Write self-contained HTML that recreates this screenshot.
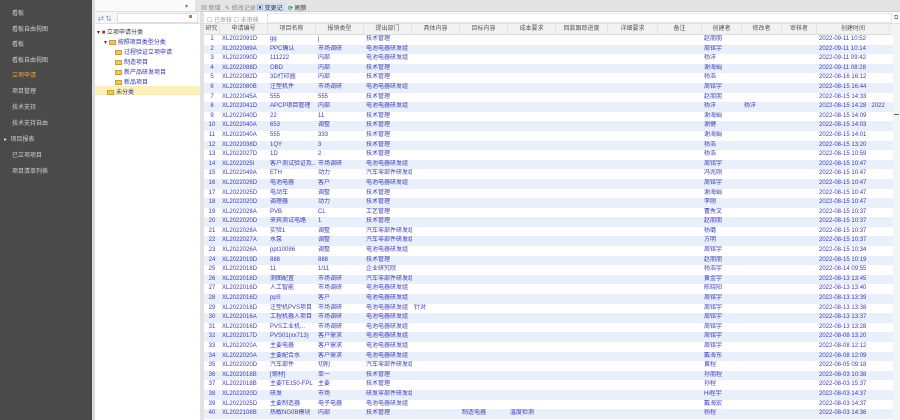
<!DOCTYPE html>
<html><head><meta charset="utf-8">
<style>
*{margin:0;padding:0;box-sizing:border-box}
body{width:900px;height:420px;overflow:hidden;background:#fff;font-family:"Liberation Sans","Noto Sans CJK SC",sans-serif;font-size:6px;position:relative}
.side{position:absolute;left:0;top:0;width:92px;height:420px;background:#4a4a4a}
.side div{position:absolute;left:12px;color:#d0d0d0;font-size:6px;white-space:nowrap}
.side .on{color:#f0a830}
.div1{position:absolute;left:92px;top:0;width:3px;height:420px;background:#dcdcdc}
.tree{position:absolute;left:95px;top:0;width:105px;height:420px;background:#fff}
.div2{position:absolute;left:200px;top:0;width:4px;height:420px;background:#e2e2e2}
.top{position:absolute;left:195px;top:0;width:705px;height:12px;background:#e4e4e4;border-bottom:1px solid #d0d0d0}
.top span{position:absolute;top:3px;color:#888}
.tb2{position:absolute;left:204px;top:12px;width:696px;height:12px;background:#fff;border-bottom:1px solid #e0e0e0}
.grid{position:absolute;left:204px;top:24px;width:689px}
.hd{height:11px;background:#f2f2f2;border-bottom:1px solid #ddd;display:flex;color:#555}
.r{height:9.6px;display:flex;color:#3a3ac0;line-height:9.6px}
.r:nth-child(even){background:#e9f0fb}
.c{overflow:hidden;white-space:nowrap;flex:none;padding-left:2px}
.hd .c{text-align:center;line-height:11px;padding:0;border-right:1px solid #e4e4e4}
.n{width:16px;text-align:center;padding:0;color:#3a3ac0}
.sb{position:absolute;left:893px;top:24px;width:7px;height:396px;background:#f4f4f4}
.ti{position:absolute;white-space:nowrap;color:#3333aa}
.fold{display:inline-block;width:7px;height:5px;background:#f0c860;border:1px solid #c9a030;vertical-align:middle;margin-right:2px}
</style></head><body>
<div class="side">
<div style="top:8px">看板</div>
<div style="top:24px">看板自由视图</div>
<div style="top:39px">看板</div>
<div style="top:55px">看板自由视图</div>
<div class="on" style="top:70px">立项申请</div>
<div style="top:86px">项目管理</div>
<div style="top:102px">技术支持</div>
<div style="top:118px">技术支持自由</div>
<div style="top:134px;left:4px">▸ &nbsp;项目报表</div>
<div style="top:150px">已立项项目</div>
<div style="top:166px">项目清单列表</div>
</div>
<div class="div1"></div>
<div class="tree">
<div style="position:absolute;left:0;top:0;width:105px;height:12px;background:#fafafa;border-bottom:1px solid #ddd"><span style="position:absolute;left:90px;top:3px;color:#777">▾</span></div>
<div style="position:absolute;left:0;top:12px;width:105px;height:12px;background:#f6f6f6;border-bottom:1px solid #e0e0e0">
<span style="position:absolute;left:3px;top:2px;color:#3a7ad0">⇄ ⇅</span>
<div style="position:absolute;left:22px;top:1px;width:81px;height:10px;background:#fff;border:1px solid #ddd"></div>
<span style="position:absolute;left:94px;top:3px;width:3px;height:3px;background:#e07020"></span></div>
<div class="ti" style="left:2px;top:27px;color:#333">▾ <span style="color:#c03030">■</span> 立项申请分类</div>
<div class="ti" style="left:9px;top:37px">▾ <span class="fold"></span>按照项目类型分类</div>
<div class="ti" style="left:20px;top:47px"><span class="fold"></span>过程验证立项申请</div>
<div class="ti" style="left:20px;top:57px"><span class="fold"></span>制造项目</div>
<div class="ti" style="left:20px;top:67px"><span class="fold"></span>新产品研发项目</div>
<div class="ti" style="left:20px;top:77px"><span class="fold"></span>新品项目</div>
<div style="position:absolute;left:0;top:86px;width:105px;height:9px;background:#fbf1b8"></div>
<div class="ti" style="left:12px;top:87px"><span class="fold"></span>未分类</div>
</div>
<div class="div2"></div>
<div class="top">
<span style="left:6px">▦ 新增</span><span style="left:30px">✎ 修改记录</span>
<span style="left:60px;color:#333;background:#cfe0f5;padding:0 2px">▣ 变更记</span>
<span style="left:93px;color:#333"><b style="color:#2a9a3a">⟳</b> 刷新</span>
</div>
<div class="tb2"><span style="position:absolute;left:3px;top:3px;color:#999">☐ 已审核 ☐ 未审核</span>
<div style="position:absolute;left:63px;top:1px;width:625px;height:10px;border:1px solid #e4e4e4"></div>
<span style="position:absolute;left:690px;top:3px;color:#777">⧉</span></div>
<div class="grid">
<div class="hd"><div class="c n" style="color:#555">研究</div><div class="c" style="width:48px">申请编号</div><div class="c" style="width:48px">项目名称</div><div class="c" style="width:48px">报销类型</div><div class="c" style="width:48px">提出部门</div><div class="c" style="width:48px">具体内容</div><div class="c" style="width:48px">目标内容</div><div class="c" style="width:48px">成本要求</div><div class="c" style="width:52px">回款跟踪进度</div><div class="c" style="width:50px">详细要求</div><div class="c" style="width:44px">备注</div><div class="c" style="width:40px">创建者</div><div class="c" style="width:40px">修改者</div><div class="c" style="width:35px">审核者</div><div class="c" style="width:73px">创建时间</div><div class="c" style="width:10px">(</div></div>
<div id="rows">
<div class="r"><div class="c n">1</div><div class="c" style="width:48px">XL2022091D</div><div class="c" style="width:48px">gg</div><div class="c" style="width:48px">j</div><div class="c" style="width:48px">技术管理</div><div class="c" style="width:290px"></div><div class="c" style="width:40px">赵朋朋</div><div class="c" style="width:75px"></div><div class="c" style="width:83px">2022-09-11 10:52</div></div>
<div class="r"><div class="c n">2</div><div class="c" style="width:48px">XL2022089A</div><div class="c" style="width:48px">PPC确认</div><div class="c" style="width:48px">市场调研</div><div class="c" style="width:48px">电池电器研发组</div><div class="c" style="width:290px"></div><div class="c" style="width:40px">周铭宇</div><div class="c" style="width:75px"></div><div class="c" style="width:83px">2022-09-11 10:14</div></div>
<div class="r"><div class="c n">3</div><div class="c" style="width:48px">XL2022090D</div><div class="c" style="width:48px">111222</div><div class="c" style="width:48px">内部</div><div class="c" style="width:48px">电池电器研发组</div><div class="c" style="width:290px"></div><div class="c" style="width:40px">杨洋</div><div class="c" style="width:75px"></div><div class="c" style="width:83px">2022-09-11 09:42</div></div>
<div class="r"><div class="c n">4</div><div class="c" style="width:48px">XL2022088D</div><div class="c" style="width:48px">OBD</div><div class="c" style="width:48px">内部</div><div class="c" style="width:48px">技术管理</div><div class="c" style="width:290px"></div><div class="c" style="width:40px">谢海娟</div><div class="c" style="width:75px"></div><div class="c" style="width:83px">2022-09-11 08:28</div></div>
<div class="r"><div class="c n">5</div><div class="c" style="width:48px">XL2022082D</div><div class="c" style="width:48px">3D打印圆</div><div class="c" style="width:48px">内部</div><div class="c" style="width:48px">技术管理</div><div class="c" style="width:290px"></div><div class="c" style="width:40px">杨浩</div><div class="c" style="width:75px"></div><div class="c" style="width:83px">2022-08-16 16:12</div></div>
<div class="r"><div class="c n">6</div><div class="c" style="width:48px">XL2022080B</div><div class="c" style="width:48px">注塑机件</div><div class="c" style="width:48px">市场调研</div><div class="c" style="width:48px">电池电器研发组</div><div class="c" style="width:290px"></div><div class="c" style="width:40px">周铭宇</div><div class="c" style="width:75px"></div><div class="c" style="width:83px">2022-08-15 16:44</div></div>
<div class="r"><div class="c n">7</div><div class="c" style="width:48px">XL2022045A</div><div class="c" style="width:48px">555</div><div class="c" style="width:48px">555</div><div class="c" style="width:48px">技术管理</div><div class="c" style="width:290px"></div><div class="c" style="width:40px">赵朋朋</div><div class="c" style="width:75px"></div><div class="c" style="width:83px">2022-08-15 14:33</div></div>
<div class="r"><div class="c n">8</div><div class="c" style="width:48px">XL2022041D</div><div class="c" style="width:48px">APCP项目管理</div><div class="c" style="width:48px">内部</div><div class="c" style="width:48px">电池电器研发组</div><div class="c" style="width:290px"></div><div class="c" style="width:40px">杨洋</div><div class="c" style="width:40px">杨洋</div><div class="c" style="width:35px"></div><div class="c" style="width:83px">2022-08-15 14:28 &nbsp; 2022</div></div>
<div class="r"><div class="c n">9</div><div class="c" style="width:48px">XL2022040D</div><div class="c" style="width:48px">22</div><div class="c" style="width:48px">11</div><div class="c" style="width:48px">技术管理</div><div class="c" style="width:290px"></div><div class="c" style="width:40px">谢海娟</div><div class="c" style="width:75px"></div><div class="c" style="width:83px">2022-08-15 14:09</div></div>
<div class="r"><div class="c n">10</div><div class="c" style="width:48px">XL2022040A</div><div class="c" style="width:48px">653</div><div class="c" style="width:48px">调整</div><div class="c" style="width:48px">技术管理</div><div class="c" style="width:290px"></div><div class="c" style="width:40px">谢健</div><div class="c" style="width:75px"></div><div class="c" style="width:83px">2022-08-15 14:03</div></div>
<div class="r"><div class="c n">11</div><div class="c" style="width:48px">XL2022040A</div><div class="c" style="width:48px">555</div><div class="c" style="width:48px">333</div><div class="c" style="width:48px">技术管理</div><div class="c" style="width:290px"></div><div class="c" style="width:40px">谢海娟</div><div class="c" style="width:75px"></div><div class="c" style="width:83px">2022-08-15 14:01</div></div>
<div class="r"><div class="c n">12</div><div class="c" style="width:48px">XL2022038D</div><div class="c" style="width:48px">1QY</div><div class="c" style="width:48px">3</div><div class="c" style="width:48px">技术管理</div><div class="c" style="width:290px"></div><div class="c" style="width:40px">杨浩</div><div class="c" style="width:75px"></div><div class="c" style="width:83px">2022-08-15 13:20</div></div>
<div class="r"><div class="c n">13</div><div class="c" style="width:48px">XL2022027D</div><div class="c" style="width:48px">1D</div><div class="c" style="width:48px">2</div><div class="c" style="width:48px">技术管理</div><div class="c" style="width:290px"></div><div class="c" style="width:40px">杨浩</div><div class="c" style="width:75px"></div><div class="c" style="width:83px">2022-08-15 10:59</div></div>
<div class="r"><div class="c n">14</div><div class="c" style="width:48px">XL2022025I</div><div class="c" style="width:48px">客户测试验证及...</div><div class="c" style="width:48px">市场调研</div><div class="c" style="width:48px">电池电器研发组</div><div class="c" style="width:290px"></div><div class="c" style="width:40px">周铭宇</div><div class="c" style="width:75px"></div><div class="c" style="width:83px">2022-08-15 10:47</div></div>
<div class="r"><div class="c n">15</div><div class="c" style="width:48px">XL2022049A</div><div class="c" style="width:48px">ETH</div><div class="c" style="width:48px">动力</div><div class="c" style="width:48px">汽车零部件研发组</div><div class="c" style="width:290px"></div><div class="c" style="width:40px">冯兆刚</div><div class="c" style="width:75px"></div><div class="c" style="width:83px">2022-08-15 10:47</div></div>
<div class="r"><div class="c n">16</div><div class="c" style="width:48px">XL2022026D</div><div class="c" style="width:48px">电池电器</div><div class="c" style="width:48px">客户</div><div class="c" style="width:48px">电池电器研发组</div><div class="c" style="width:290px"></div><div class="c" style="width:40px">周铭宇</div><div class="c" style="width:75px"></div><div class="c" style="width:83px">2022-08-15 10:47</div></div>
<div class="r"><div class="c n">17</div><div class="c" style="width:48px">XL2022025D</div><div class="c" style="width:48px">电动车</div><div class="c" style="width:48px">调整</div><div class="c" style="width:48px">技术管理</div><div class="c" style="width:290px"></div><div class="c" style="width:40px">谢海娟</div><div class="c" style="width:75px"></div><div class="c" style="width:83px">2022-08-15 10:47</div></div>
<div class="r"><div class="c n">18</div><div class="c" style="width:48px">XL2022020D</div><div class="c" style="width:48px">调理器</div><div class="c" style="width:48px">动力</div><div class="c" style="width:48px">技术管理</div><div class="c" style="width:290px"></div><div class="c" style="width:40px">李刚</div><div class="c" style="width:75px"></div><div class="c" style="width:83px">2022-08-15 10:47</div></div>
<div class="r"><div class="c n">19</div><div class="c" style="width:48px">XL2022028A</div><div class="c" style="width:48px">PVB</div><div class="c" style="width:48px">CL</div><div class="c" style="width:48px">工艺管理</div><div class="c" style="width:290px"></div><div class="c" style="width:40px">曹秀文</div><div class="c" style="width:75px"></div><div class="c" style="width:83px">2022-08-15 10:37</div></div>
<div class="r"><div class="c n">20</div><div class="c" style="width:48px">XL2022020D</div><div class="c" style="width:48px">来宾测试电路</div><div class="c" style="width:48px">1</div><div class="c" style="width:48px">技术管理</div><div class="c" style="width:290px"></div><div class="c" style="width:40px">赵朋朋</div><div class="c" style="width:75px"></div><div class="c" style="width:83px">2022-08-15 10:37</div></div>
<div class="r"><div class="c n">21</div><div class="c" style="width:48px">XL2022028A</div><div class="c" style="width:48px">实验1</div><div class="c" style="width:48px">调整</div><div class="c" style="width:48px">汽车零部件研发组</div><div class="c" style="width:290px"></div><div class="c" style="width:40px">杨璐</div><div class="c" style="width:75px"></div><div class="c" style="width:83px">2022-08-15 10:37</div></div>
<div class="r"><div class="c n">22</div><div class="c" style="width:48px">XL2022027A</div><div class="c" style="width:48px">水泵</div><div class="c" style="width:48px">调整</div><div class="c" style="width:48px">汽车零部件研发组</div><div class="c" style="width:290px"></div><div class="c" style="width:40px">方明</div><div class="c" style="width:75px"></div><div class="c" style="width:83px">2022-08-15 10:37</div></div>
<div class="r"><div class="c n">23</div><div class="c" style="width:48px">XL2022026A</div><div class="c" style="width:48px">ppt10086</div><div class="c" style="width:48px">调整</div><div class="c" style="width:48px">电池电器研发组</div><div class="c" style="width:290px"></div><div class="c" style="width:40px">周铭宇</div><div class="c" style="width:75px"></div><div class="c" style="width:83px">2022-08-15 10:34</div></div>
<div class="r"><div class="c n">24</div><div class="c" style="width:48px">XL2022019D</div><div class="c" style="width:48px">888</div><div class="c" style="width:48px">888</div><div class="c" style="width:48px">技术管理</div><div class="c" style="width:290px"></div><div class="c" style="width:40px">赵朋朋</div><div class="c" style="width:75px"></div><div class="c" style="width:83px">2022-08-15 10:19</div></div>
<div class="r"><div class="c n">25</div><div class="c" style="width:48px">XL2022018D</div><div class="c" style="width:48px">11</div><div class="c" style="width:48px">1/11</div><div class="c" style="width:48px">企业研究院</div><div class="c" style="width:290px"></div><div class="c" style="width:40px">杨浩宇</div><div class="c" style="width:75px"></div><div class="c" style="width:83px">2022-08-14 09:55</div></div>
<div class="r"><div class="c n">26</div><div class="c" style="width:48px">XL2022018D</div><div class="c" style="width:48px">测图配置</div><div class="c" style="width:48px">市场调研</div><div class="c" style="width:48px">汽车零部件研发组</div><div class="c" style="width:290px"></div><div class="c" style="width:40px">黄金宇</div><div class="c" style="width:75px"></div><div class="c" style="width:83px">2022-08-13 13:45</div></div>
<div class="r"><div class="c n">27</div><div class="c" style="width:48px">XL2022016D</div><div class="c" style="width:48px">人工智能</div><div class="c" style="width:48px">市场调研</div><div class="c" style="width:48px">电池电器研发组</div><div class="c" style="width:290px"></div><div class="c" style="width:40px">陈晓阳</div><div class="c" style="width:75px"></div><div class="c" style="width:83px">2022-08-13 13:40</div></div>
<div class="r"><div class="c n">28</div><div class="c" style="width:48px">XL2022016D</div><div class="c" style="width:48px">ppS</div><div class="c" style="width:48px">客户</div><div class="c" style="width:48px">电池电器研发组</div><div class="c" style="width:290px"></div><div class="c" style="width:40px">周铭宇</div><div class="c" style="width:75px"></div><div class="c" style="width:83px">2022-08-13 13:39</div></div>
<div class="r"><div class="c n">29</div><div class="c" style="width:48px">XL2022016D</div><div class="c" style="width:48px">注塑机PVS项目</div><div class="c" style="width:48px">市场调研</div><div class="c" style="width:48px">电池电器研发组</div><div class="c" style="width:48px">针对</div><div class="c" style="width:242px"></div><div class="c" style="width:40px">周铭宇</div><div class="c" style="width:75px"></div><div class="c" style="width:83px">2022-08-13 13:38</div></div>
<div class="r"><div class="c n">30</div><div class="c" style="width:48px">XL2022016A</div><div class="c" style="width:48px">工程机器人项目</div><div class="c" style="width:48px">市场调研</div><div class="c" style="width:48px">电池电器研发组</div><div class="c" style="width:290px"></div><div class="c" style="width:40px">周铭宇</div><div class="c" style="width:75px"></div><div class="c" style="width:83px">2022-08-13 13:37</div></div>
<div class="r"><div class="c n">31</div><div class="c" style="width:48px">XL2022016D</div><div class="c" style="width:48px">PVS工业机...</div><div class="c" style="width:48px">市场调研</div><div class="c" style="width:48px">电池电器研发组</div><div class="c" style="width:290px"></div><div class="c" style="width:40px">周铭宇</div><div class="c" style="width:75px"></div><div class="c" style="width:83px">2022-08-13 13:28</div></div>
<div class="r"><div class="c n">32</div><div class="c" style="width:48px">XL2022017D</div><div class="c" style="width:48px">PVS01(xx713)</div><div class="c" style="width:48px">客户需求</div><div class="c" style="width:48px">电池电器研发组</div><div class="c" style="width:290px"></div><div class="c" style="width:40px">周铭宇</div><div class="c" style="width:75px"></div><div class="c" style="width:83px">2022-08-08 13:20</div></div>
<div class="r"><div class="c n">33</div><div class="c" style="width:48px">XL2022020A</div><div class="c" style="width:48px">主要电器</div><div class="c" style="width:48px">客户需求</div><div class="c" style="width:48px">电池电器研发组</div><div class="c" style="width:290px"></div><div class="c" style="width:40px">周铭宇</div><div class="c" style="width:75px"></div><div class="c" style="width:83px">2022-08-08 12:12</div></div>
<div class="r"><div class="c n">34</div><div class="c" style="width:48px">XL2022020A</div><div class="c" style="width:48px">主要配合水</div><div class="c" style="width:48px">客户需求</div><div class="c" style="width:48px">电池电器研发组</div><div class="c" style="width:290px"></div><div class="c" style="width:40px">戴海东</div><div class="c" style="width:75px"></div><div class="c" style="width:83px">2022-08-08 12:09</div></div>
<div class="r"><div class="c n">35</div><div class="c" style="width:48px">XL2022020D</div><div class="c" style="width:48px">汽车部件</div><div class="c" style="width:48px">切削</div><div class="c" style="width:48px">汽车零部件研发组</div><div class="c" style="width:290px"></div><div class="c" style="width:40px">黄程</div><div class="c" style="width:75px"></div><div class="c" style="width:83px">2022-08-05 09:18</div></div>
<div class="r"><div class="c n">36</div><div class="c" style="width:48px">XL2022018B</div><div class="c" style="width:48px">[钢材]</div><div class="c" style="width:48px">单一</div><div class="c" style="width:48px">技术管理</div><div class="c" style="width:290px"></div><div class="c" style="width:40px">孙朋程</div><div class="c" style="width:75px"></div><div class="c" style="width:83px">2022-08-03 10:38</div></div>
<div class="r"><div class="c n">37</div><div class="c" style="width:48px">XL2022018B</div><div class="c" style="width:48px">主要TE150-FPL</div><div class="c" style="width:48px">主要</div><div class="c" style="width:48px">技术管理</div><div class="c" style="width:290px"></div><div class="c" style="width:40px">孙程</div><div class="c" style="width:75px"></div><div class="c" style="width:83px">2022-08-03 15:37</div></div>
<div class="r"><div class="c n">38</div><div class="c" style="width:48px">XL2022020D</div><div class="c" style="width:48px">研发</div><div class="c" style="width:48px">市场</div><div class="c" style="width:48px">研发零部件研发组</div><div class="c" style="width:290px"></div><div class="c" style="width:40px">Hi程宇</div><div class="c" style="width:75px"></div><div class="c" style="width:83px">2022-08-03 14:37</div></div>
<div class="r"><div class="c n">39</div><div class="c" style="width:48px">XL2022025D</div><div class="c" style="width:48px">主要制造器</div><div class="c" style="width:48px">电子电器</div><div class="c" style="width:48px">电池电器研发组</div><div class="c" style="width:290px"></div><div class="c" style="width:40px">戴海宏</div><div class="c" style="width:75px"></div><div class="c" style="width:83px">2022-08-03 14:37</div></div>
<div class="r"><div class="c n">40</div><div class="c" style="width:48px">XL2022108B</div><div class="c" style="width:48px">热敏NG0B模块</div><div class="c" style="width:48px">内部</div><div class="c" style="width:48px">技术管理</div><div class="c" style="width:48px"></div><div class="c" style="width:48px">制造电器</div><div class="c" style="width:48px">温度检测</div><div class="c" style="width:146px"></div><div class="c" style="width:40px">杨程</div><div class="c" style="width:75px"></div><div class="c" style="width:83px">2022-08-03 14:36</div></div>
</div>
</div>
<div class="sb"><div style="position:absolute;left:1px;top:90px;width:5px;height:1px;background:#666"></div></div>
</body></html>
